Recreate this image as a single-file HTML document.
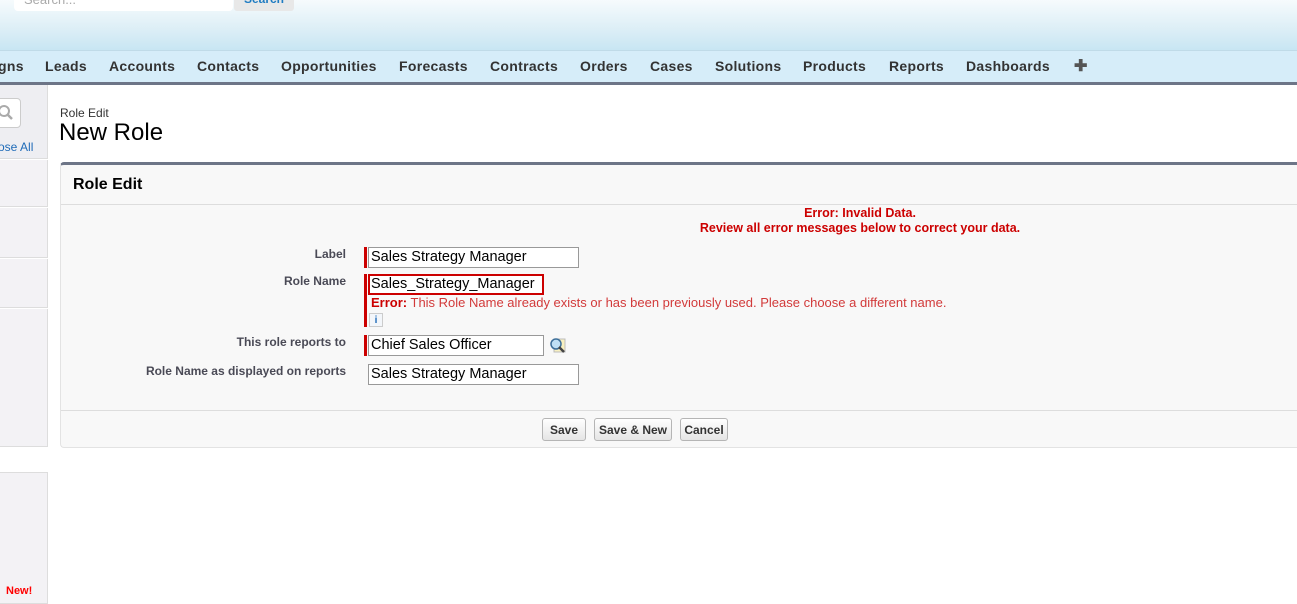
<!DOCTYPE html>
<html><head><style>
body{margin:0;width:1297px;height:596px;overflow:hidden;background:#fff;font-family:"Liberation Sans",Arial,sans-serif;position:relative}
.a{position:absolute}
.hdr{left:0;top:0;width:1297px;height:50px;background:linear-gradient(#f6fbfd,#e0f0f7 50%,#c8e6f3)}
.nav{left:0;top:50px;width:1297px;height:31px;background:#d6edf9;border-bottom:3px solid #6d7587;border-top:1px solid #c0dbe8}
.nav span{position:absolute;top:7px;font-size:14px;font-weight:bold;color:#333;letter-spacing:.3px}
.side{background:#f3f2f5;border-right:1px solid #ddd;border-bottom:1px solid #ddd;left:0;width:47px}
.lbl{font-size:12px;font-weight:bold;color:#4a4a56;text-align:right;width:346px;left:0}
.inp{border:1px solid #999;height:19px;background:#fff;font-size:14.5px;line-height:19px;padding-left:2px;color:#000;box-sizing:border-box}
.req{width:3px;background:#c00}
.btn{top:418px;height:23px;border:1px solid #b5b5b5;border-radius:3px;background:linear-gradient(#fff,#e5e5e5);font-size:12px;font-weight:bold;color:#333;line-height:22px;text-align:center;box-sizing:border-box}
</style></head><body>
<div class="a hdr"></div>
<div class="a" style="left:14px;top:-8px;width:219px;height:19px;background:#fff;border-radius:0 0 4px 4px;font-size:13px;color:#aaa;padding-left:10px;box-sizing:border-box">Search...</div>
<div class="a" style="left:234px;top:-8px;width:60px;height:19px;background:#e8e8e8;border-radius:3px;color:#1f7cc2;font-size:12px;font-weight:bold;text-align:center;line-height:14px">Search</div>
<div class="a nav">
<span style="left:-2px">gns</span><span style="left:45px">Leads</span><span style="left:109px">Accounts</span><span style="left:197px">Contacts</span><span style="left:281px">Opportunities</span><span style="left:399px">Forecasts</span><span style="left:490px">Contracts</span><span style="left:580px">Orders</span><span style="left:650px">Cases</span><span style="left:715px">Solutions</span><span style="left:803px">Products</span><span style="left:889px">Reports</span><span style="left:966px">Dashboards</span><span style="left:1074px;font-size:16px;top:5px;color:#555">✚</span>
</div>
<div class="a side" style="top:85px;height:73px;background:#eeeef2"></div>
<div class="a" style="left:-6px;top:98px;width:27px;height:30px;background:#fff;border:1px solid #ccc;border-radius:4px;box-sizing:border-box"><svg width="25" height="28"><circle cx="9" cy="12" r="5" fill="none" stroke="#aaa" stroke-width="2"/><line x1="13" y1="16" x2="17" y2="20" stroke="#aaa" stroke-width="2.5"/></svg></div>
<div class="a" style="left:-2px;top:140px;font-size:12px;color:#1f6bb8">ose All</div>
<div class="a side" style="top:160px;height:46px"></div>
<div class="a side" style="top:208px;height:49px"></div>
<div class="a side" style="top:259px;height:48px"></div>
<div class="a side" style="top:309px;height:137px"></div>
<div class="a side" style="top:472px;height:130px;border-top:1px solid #ddd"></div>
<div class="a" style="left:6px;top:585px;font-size:11px;font-weight:bold;color:#f00">New!</div>
<div class="a" style="left:60px;top:106px;font-size:12px;color:#333">Role Edit</div>
<div class="a" style="left:59px;top:119px;font-size:24px;color:#000">New Role</div>
<div class="a" style="left:60px;top:162px;width:1240px;height:286px;background:#f8f8f8;border-top:3px solid #6d7587;border-left:1px solid #e3e3e3;border-bottom:1px solid #e3e3e3;border-radius:4px 0 0 4px;box-sizing:border-box"></div>
<div class="a" style="left:73px;top:176px;font-size:16px;font-weight:bold;color:#000">Role Edit</div>
<div class="a" style="left:61px;top:204px;width:1236px;height:1px;background:#ddd"></div>
<div class="a" style="left:61px;top:410px;width:1236px;height:1px;background:#ddd"></div>
<div class="a" style="left:640px;width:440px;top:206px;text-align:center;font-size:12.5px;font-weight:bold;color:#c00;line-height:15px">Error: Invalid Data.<br>Review all error messages below to correct your data.</div>
<div class="a lbl" style="top:247px">Label</div>
<div class="a req" style="left:364px;top:247px;height:21px"></div>
<div class="a inp" style="left:368px;top:247px;width:211px;height:21px">Sales Strategy Manager</div>
<div class="a lbl" style="top:274px">Role Name</div>
<div class="a req" style="left:364px;top:274px;height:53px"></div>
<div class="a inp" style="left:368px;top:274px;width:176px;height:21px;border:2px solid #c00;line-height:17px;padding-left:1px">Sales_Strategy_Manager</div>
<div class="a" style="left:371px;top:295px;font-size:13px;color:#d23a3a"><b style="color:#c00">Error:</b> This Role Name already exists or has been previously used. Please choose a different name.</div>
<div class="a" style="left:369px;top:313px;width:14px;height:14px;border:1px solid #ccc;background:#f3f6fa;font-size:10px;font-weight:bold;color:#1f6bb8;text-align:center;line-height:14px;box-sizing:border-box">i</div>
<div class="a lbl" style="top:335px">This role reports to</div>
<div class="a req" style="left:364px;top:335px;height:21px"></div>
<div class="a inp" style="left:368px;top:335px;width:176px;height:21px">Chief Sales Officer</div>
<div class="a" style="left:549px;top:337px;width:17px;height:17px"><svg width="17" height="17"><rect x="5" y="2" width="11" height="13" fill="#f8f0c0" stroke="#bbb"/><circle cx="7" cy="7" r="5" fill="#bfe0f5" stroke="#3d6f99" stroke-width="1.5"/><line x1="10" y1="10" x2="15" y2="15" stroke="#444" stroke-width="2.5"/></svg></div>
<div class="a lbl" style="top:364px">Role Name as displayed on reports</div>
<div class="a inp" style="left:368px;top:364px;width:211px;height:21px">Sales Strategy Manager</div>
<div class="a btn" style="left:542px;width:44px">Save</div>
<div class="a btn" style="left:594px;width:78px">Save &amp; New</div>
<div class="a btn" style="left:680px;width:48px">Cancel</div>
</body></html>
